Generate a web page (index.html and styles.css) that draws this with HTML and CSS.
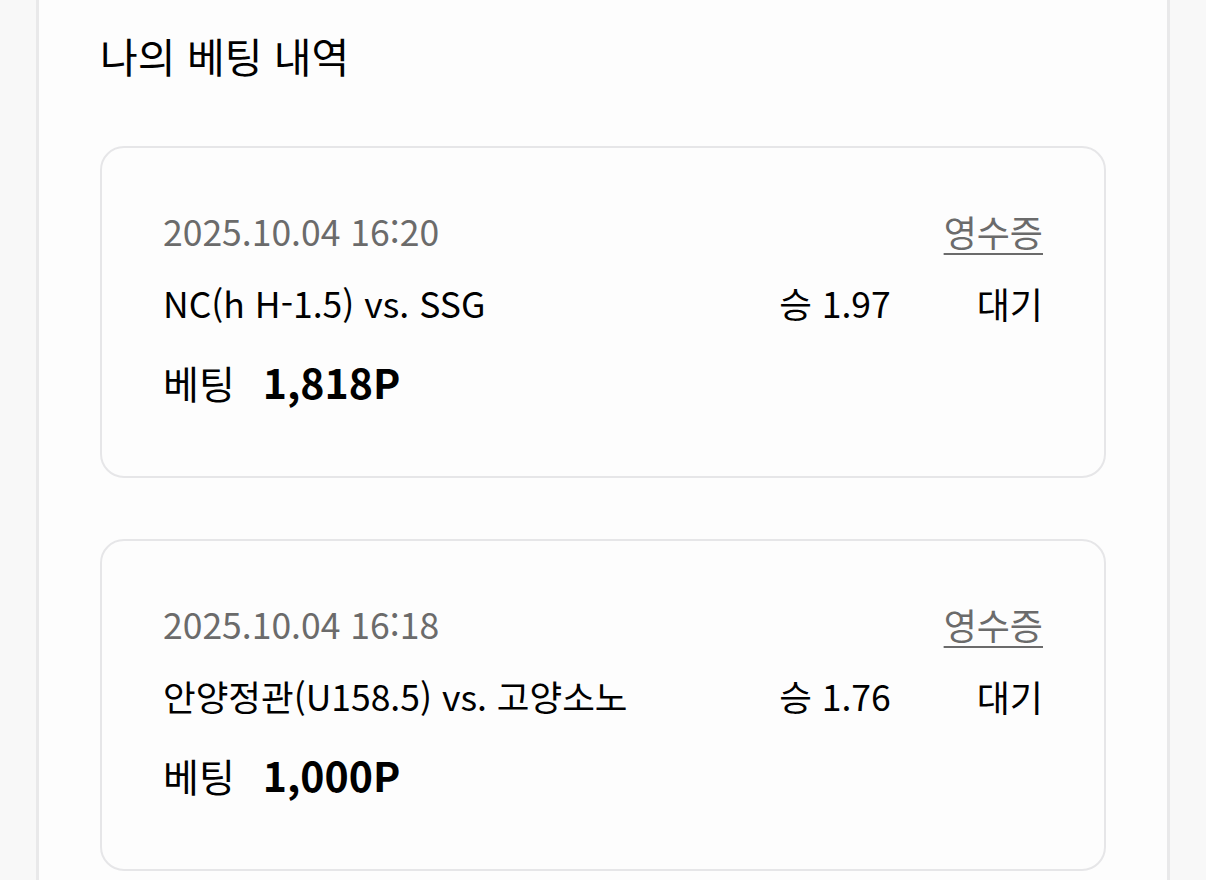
FILE: index.html
```html
<!DOCTYPE html>
<html lang="ko">
<head>
<meta charset="utf-8">
<link rel="stylesheet" href="styles.css">
</head>
<body>
<div class="panel">
  <h1 class="title">나의 베팅 내역</h1>
  <div class="list">
    <div class="card">
      <div class="row top">
        <span class="date">2025.10.04 16:20</span>
        <a class="receipt">영수증</a>
      </div>
      <div class="row match-row">
        <span class="match">NC(h H-1.5) vs. SSG</span>
        <span class="odds">승 1.97</span>
        <span class="status">대기</span>
      </div>
      <div class="bet">
        <span class="bet-label">베팅</span>
        <span class="bet-amount">1,818P</span>
      </div>
    </div>
    <div class="card">
      <div class="row top">
        <span class="date">2025.10.04 16:18</span>
        <a class="receipt">영수증</a>
      </div>
      <div class="row match-row">
        <span class="match">안양정관(U158.5) vs. 고양소노</span>
        <span class="odds">승 1.76</span>
        <span class="status">대기</span>
      </div>
      <div class="bet">
        <span class="bet-label">베팅</span>
        <span class="bet-amount">1,000P</span>
      </div>
    </div>
  </div>
</div>
</body>
</html>
```

FILE: styles.css
```css
html, body {
  margin: 0;
  padding: 0;
  background: #f8f8f8;
  font-family: "Noto Sans CJK KR", "Noto Sans", sans-serif;
  color: #000;
}
.panel {
  margin-left: 36px;
  width: 1134px;
  min-height: 880px;
  border-left: 3px solid #e9e9ea;
  border-right: 3px solid #e9e9ea;
  background: #fdfdfd;
  padding: 27px 61px 0;
  box-sizing: border-box;
}
.title {
  margin: 0;
  font-size: 41px;
  font-weight: 400;
  line-height: 57px;
}
.list {
  margin-top: 62px;
  display: flex;
  flex-direction: column;
  gap: 61px;
}
.card {
  border: 2px solid #e6e6e8;
  border-radius: 24px;
  padding: 59px 61px 69px;
  background: #fdfdfd;
}
.row {
  display: flex;
  align-items: center;
}
.top {
  justify-content: space-between;
  line-height: 48px;
}
.date {
  font-size: 35.5px;
  color: #6b6b6b;
}
.receipt {
  font-size: 36px;
  color: #6b6b6b;
  text-decoration: underline;
  text-underline-offset: 6px;
  text-decoration-thickness: 2px;
}
.match-row {
  margin-top: 24px;
  line-height: 48px;
  font-size: 35.5px;
}
.match {
  flex: 1;
}
.odds {
  font-size: 35.5px;
  margin-right: 86px;
}
.status {
  font-size: 36px;
}
.bet {
  margin-top: 29px;
  line-height: 50px;
  display: flex;
  align-items: baseline;
  gap: 28px;
}
.bet-label {
  font-size: 39px;
}
.bet-amount {
  font-size: 41px;
  font-weight: 700;
}
```
